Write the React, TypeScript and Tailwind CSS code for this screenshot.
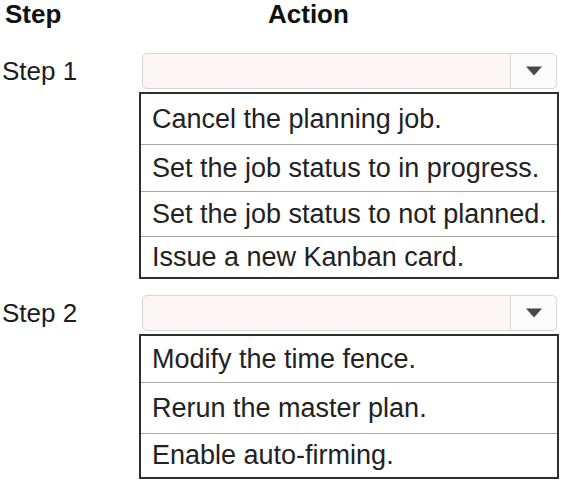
import React from "react";

function Select() {
  return (
    <div className="ml-[3px] mr-[2px] h-[36px] rounded-[5px] border border-[#d4d4d4] bg-[#fdf6f6] flex">
      <div className="flex-1" />
      <div className="w-[46px] border-l border-[#d8d8d8] flex items-center justify-center bg-[#fbfbfb] rounded-r-[5px]">
        <svg width="18" height="10" viewBox="0 0 18 10">
          <polygon points="1,0.5 17,0.5 9,9.5" fill="#474747" />
        </svg>
      </div>
    </div>
  );
}

function Options({ items }: { items: { t: string; h: string }[] }) {
  return (
    <div className="mt-[3px] border-2 border-[#2f2f2f] flex flex-col">
      {items.map((it, i) => (
        <div
          key={i}
          className={`${it.h} flex items-center pl-[11px] text-[27px] leading-[31px] text-[#222] whitespace-nowrap ${
            i > 0 ? "border-t border-[#a8a8a8]" : ""
          }`}
        >
          {it.t}
        </div>
      ))}
    </div>
  );
}

function StepRow({ label, items, className }: { label: string; items: { t: string; h: string }[]; className: string }) {
  return (
    <div className={`flex ${className}`}>
      <div className="w-[139px] pl-[2px]">
        <div className="h-[36px] flex items-center text-[26px] leading-[30px] text-[#1c1c1c]">{label}</div>
      </div>
      <div className="w-[420px]">
        <Select />
        <Options items={items} />
      </div>
    </div>
  );
}

export default function App() {
  return (
    <div
      className="w-[561px] h-[482px] bg-white overflow-hidden"
      style={{ fontFamily: '"Liberation Sans", Arial, sans-serif' }}
    >
      <div className="flex h-[29px] text-[26px] leading-[29px] font-bold text-[#111]">
        <div className="w-[268px] pl-[5px]">Step</div>
        <div>Action</div>
      </div>
      <StepRow
        className="mt-[24px]"
        label="Step 1"
        items={[
          { t: "Cancel the planning job.", h: "h-[50px]" },
          { t: "Set the job status to in progress.", h: "h-[47px]" },
          { t: "Set the job status to not planned.", h: "h-[45px]" },
          { t: "Issue a new Kanban card.", h: "h-[41px]" },
        ]}
      />
      <StepRow
        className="mt-[16px]"
        label="Step 2"
        items={[
          { t: "Modify the time fence.", h: "h-[46px]" },
          { t: "Rerun the master plan.", h: "h-[51px]" },
          { t: "Enable auto-firming.", h: "h-[44px]" },
        ]}
      />
    </div>
  );
}
